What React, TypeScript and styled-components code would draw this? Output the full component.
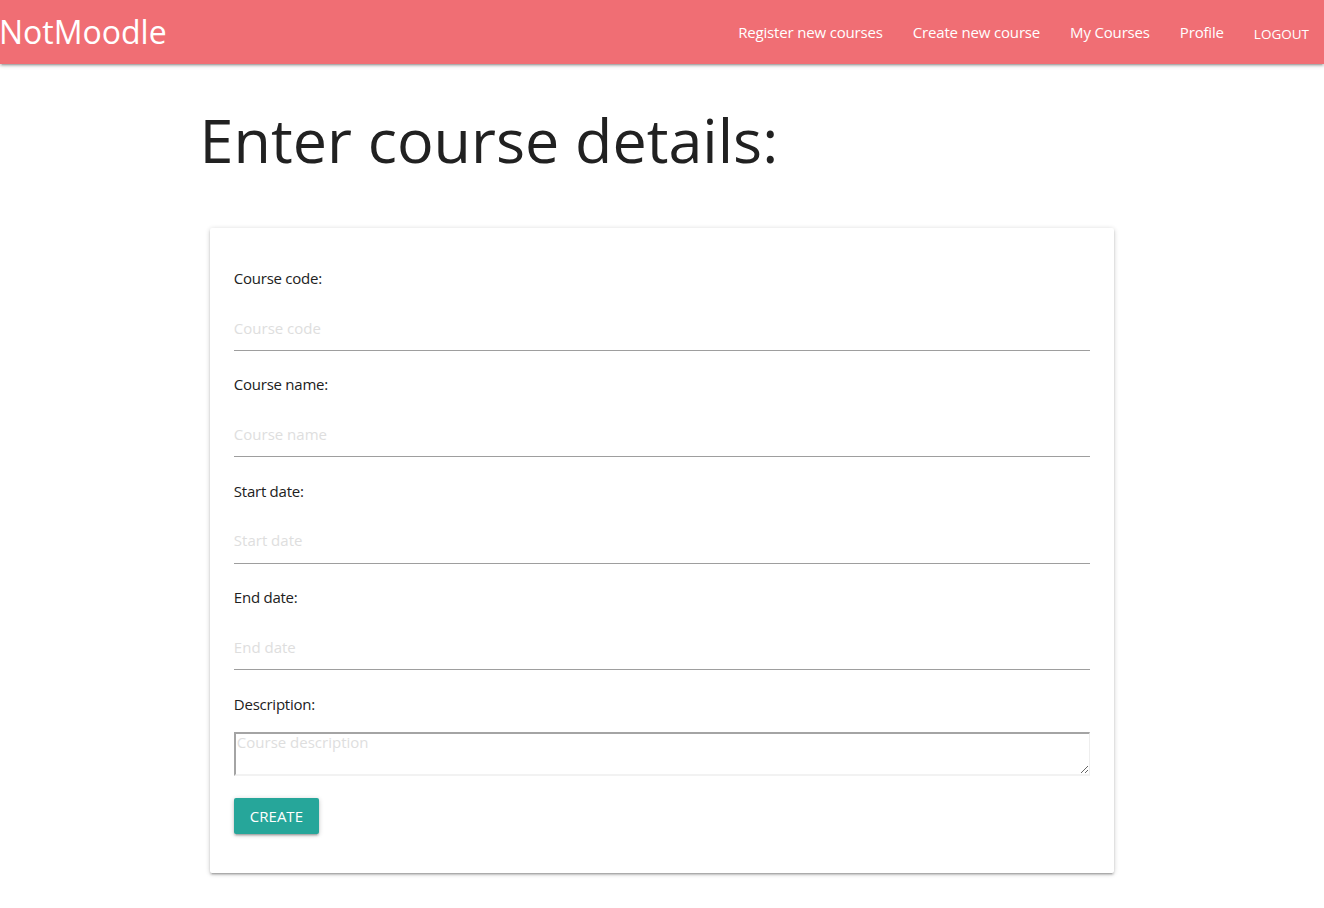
import React from "react";
import styled, { createGlobalStyle } from "styled-components";

const GlobalStyle = createGlobalStyle`
  html, body {
    margin: 0;
    padding: 0;
    background: #ffffff;
    font-family: "Open Sans", "Noto Sans", sans-serif;
    color: rgba(0, 0, 0, 0.87);
  }
  * { box-sizing: border-box; }
`;

const NavBar = styled.nav`
  height: 64px;
  background: #f06e74;
  display: flex;
  align-items: center;
  justify-content: space-between;
  box-shadow: 0 2px 2px 0 rgba(0, 0, 0, 0.14), 0 3px 1px -2px rgba(0, 0, 0, 0.12),
    0 1px 5px 0 rgba(0, 0, 0, 0.2);
`;

const Brand = styled.a`
  color: #ffffff;
  font-size: 32px;
  line-height: 64px;
  text-decoration: none;
  margin-left: -1px;
`;

const NavList = styled.ul`
  display: flex;
  list-style: none;
  margin: 0;
  padding: 0;
  height: 64px;
`;

const NavLink = styled.a<{ $caps?: boolean }>`
  display: block;
  padding: 0 15px;
  line-height: 64px;
  color: #ffffff;
  text-decoration: none;
  font-size: ${(p) => (p.$caps ? "13.5px" : "15px")};
  letter-spacing: ${(p) => (p.$caps ? "0" : "-0.17px")};
  padding-top: ${(p) => (p.$caps ? "2px" : "0")};
`;

const Container = styled.main`
  width: 70%;
  margin: 0 auto;
  padding-bottom: 35px;
`;

const Heading = styled.h1`
  font-size: 61px;
  font-weight: 400;
  line-height: 67px;
  margin: 42px 0 55px 1px;
  color: #212121;
`;

const Card = styled.form`
  margin: 0 11.25px;
  background: #ffffff;
  border-radius: 2px;
  padding: 39px 24px;
  display: flex;
  flex-direction: column;
  box-shadow: 0 2px 2px 0 rgba(0, 0, 0, 0.14), 0 3px 1px -2px rgba(0, 0, 0, 0.12),
    0 1px 5px 0 rgba(0, 0, 0, 0.2);
`;

const Field = styled.div`
  display: flex;
  flex-direction: column;
  margin-bottom: 22.4px;
`;

const Label = styled.label`
  font-size: 15px;
  line-height: 22px;
  letter-spacing: -0.25px;
  color: #212121;
  margin-bottom: 16px;
`;

const TextInput = styled.input`
  height: 46px;
  width: 100%;
  border: none;
  border-bottom: 1px solid #9e9e9e;
  outline: none;
  padding: 0;
  font-family: inherit;
  font-size: 15px;
  color: #212121;
  background: transparent;
  &::placeholder {
    color: #dedede;
  }
`;

const TextArea = styled.textarea`
  width: 100%;
  height: 44px;
  margin-top: 1px;
  padding: 0 1px;
  font-family: inherit;
  font-size: 15px;
  line-height: 16px;
  color: #212121;
  border-style: solid;
  border-width: 2px 1px 2px 2px;
  border-color: #a4a4a4 #eeeeee #f2f2f2 #a4a4a4;
  outline: none;
  background: #ffffff;
  &::placeholder {
    color: #dedede;
  }
`;

const Button = styled.button`
  align-self: flex-start;
  height: 36px;
  line-height: 36px;
  padding: 0 16px;
  border: none;
  border-radius: 2px;
  background: #26a69a;
  color: #ffffff;
  font-family: inherit;
  font-size: 15px;
  text-transform: uppercase;
  cursor: pointer;
  box-shadow: 0 2px 2px 0 rgba(0, 0, 0, 0.14), 0 3px 1px -2px rgba(0, 0, 0, 0.12),
    0 1px 5px 0 rgba(0, 0, 0, 0.2);
`;

const fields = [
  { id: "code", label: "Course code:", placeholder: "Course code" },
  { id: "name", label: "Course name:", placeholder: "Course name" },
  { id: "start", label: "Start date:", placeholder: "Start date" },
  { id: "end", label: "End date:", placeholder: "End date" },
];

const links = ["Register new courses", "Create new course", "My Courses", "Profile"];

export default function App() {
  return (
    <>
      <GlobalStyle />
      <NavBar>
        <Brand href="#">NotMoodle</Brand>
        <NavList>
          {links.map((l) => (
            <li key={l}>
              <NavLink href="#">{l}</NavLink>
            </li>
          ))}
          <li>
            <NavLink href="#" $caps>
              LOGOUT
            </NavLink>
          </li>
        </NavList>
      </NavBar>
      <Container>
        <Heading>Enter course details:</Heading>
        <Card onSubmit={(e) => e.preventDefault()}>
          {fields.map((f) => (
            <Field key={f.id}>
              <Label htmlFor={f.id}>{f.label}</Label>
              <TextInput id={f.id} placeholder={f.placeholder} />
            </Field>
          ))}
          <Field>
            <Label htmlFor="desc">Description:</Label>
            <TextArea id="desc" placeholder="Course description" />
          </Field>
          <Button type="submit">Create</Button>
        </Card>
      </Container>
    </>
  );
}
